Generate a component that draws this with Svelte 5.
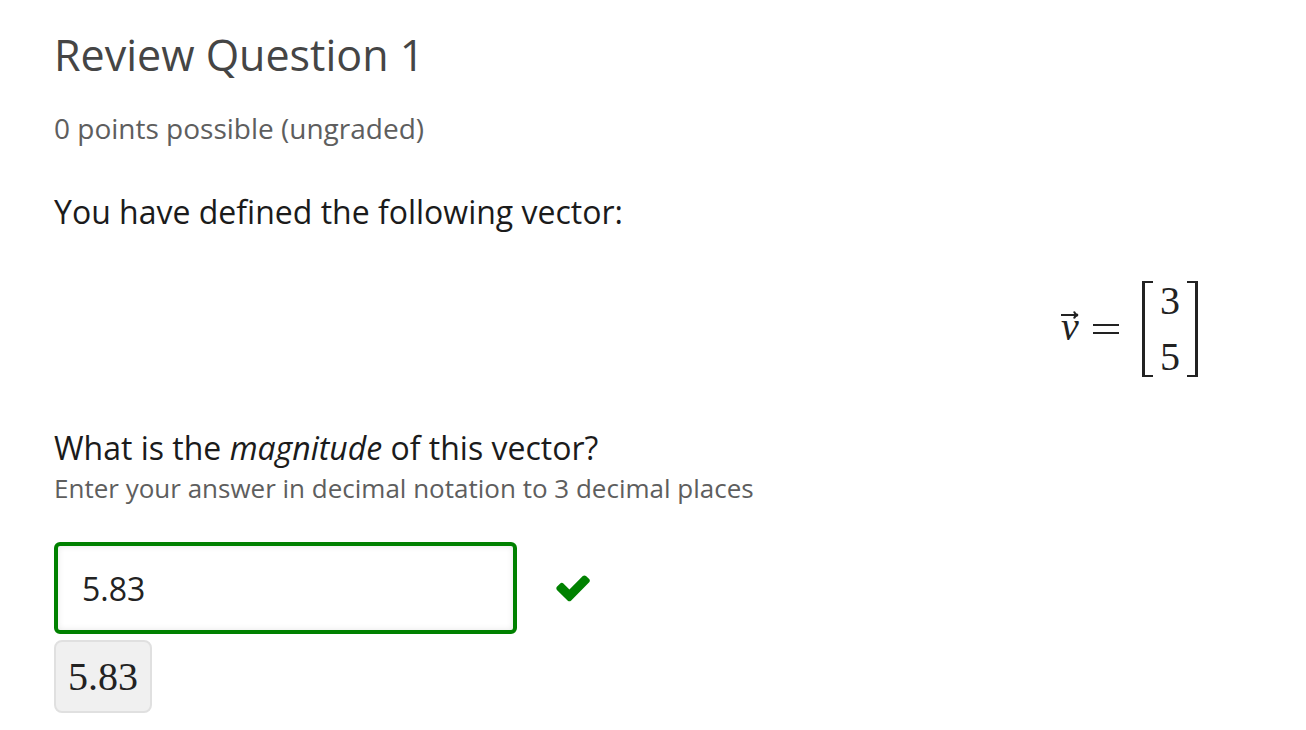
<script>
  let answer = $state('5.83');
</script>

<main>
  <h1>Review Question 1</h1>
  <p class="points">0 points possible (ungraded)</p>
  <p class="lead">You have defined the following vector:</p>

  <div class="equation">
    <span class="vec">
      <svg viewBox="0 0 20 10" aria-hidden="true"><path d="M1 5H18M14 1.500Q15 4.500 18 5Q15 5.500 14 8.500" /></svg>
      <i>v</i>
    </span>
    <svg class="equals" viewBox="0 0 28 12" aria-hidden="true"><path d="M1 2H27M1 10H27" /></svg>
    <span class="matrix">
      <span class="column"><span>3</span><span>5</span></span>
    </span>
  </div>

  <label for="answer">What is the <em>magnitude</em> of this vector?</label>
  <p class="hint" id="hint">Enter your answer in decimal notation to 3 decimal places</p>

  <div class="entry">
    <input id="answer" type="text" aria-describedby="hint" bind:value={answer} />
    <svg class="check" viewBox="0 0 34 27" aria-hidden="true">
      <path d="M33.200 7.200 15 25.700Q13.400 27 11.800 25.700L.9 14.900Q-.3 13.300 .9 11.700L4.200 8.500Q5.800 7.200 7.400 8.500L13.400 14.500 26.800 1.100Q28.400 -.2 30 1.100L33.200 4.100Q34.500 5.600 33.200 7.200Z" />
    </svg>
  </div>
  <output for="answer">{answer}</output>
</main>

<style>
  :global(body) { margin: 0; background: #fff; }
  main { padding: 27px 54px 16px; font-family: "Open Sans", sans-serif; color: #222; }
  h1 { margin: 0; font-size: 43px; line-height: 56px; font-weight: 400; color: #454545; }
  p { margin: 0; }
  .points { margin-top: 26px; font-size: 28px; line-height: 38px; color: #5e5e5e; }
  .lead { margin-top: 41px; font-size: 32px; line-height: 48px; color: #1b1b1b; }
  .equation { display: flex; align-items: center; justify-content: flex-end; margin: 45px 54px 0 0; font-family: "Liberation Serif", serif; font-size: 40px; }
  .vec { display: grid; justify-items: center; line-height: 14px; padding-bottom: 14px; }
  .vec svg { width: 20px; height: 10px; }
  .equals { width: 28px; height: 12px; margin: 0 22px 0 12px; }
  .equation svg { fill: none; stroke: #222; stroke-width: 2; }
  .matrix { display: flex; gap: 7px; }
  .matrix::before, .matrix::after { content: ""; width: 8px; border: 2px solid #222; border-width: 2px 0 2px 3px; }
  .matrix::after { border-width: 2px 3px 2px 0; }
  .column { display: grid; line-height: 56px; margin: -8px 0; }
  label { display: block; margin-top: 47px; font-size: 32px; line-height: 48px; color: #1b1b1b; }
  .hint { margin-top: -1px; font-size: 26px; line-height: 34px; color: #5e5e5e; }
  .entry { display: flex; align-items: center; gap: 39px; margin-top: 37px; }
  input { box-sizing: border-box; width: 463px; height: 92px; padding: 0 24px; border: 4px solid #008100; border-radius: 6px; box-shadow: inset 0 0 6px rgb(0 0 0 / 10%); font: inherit; font-size: 32px; color: #222; outline: none; }
  .check { width: 34px; height: 27px; fill: #008100; }
  output { display: inline-block; margin-top: 6px; padding: 10px 12px; border: 2px solid #e0e0e0; border-radius: 8px; background: #f0f0f0; font-family: "Liberation Serif", serif; font-size: 40px; line-height: 49px; }
</style>
